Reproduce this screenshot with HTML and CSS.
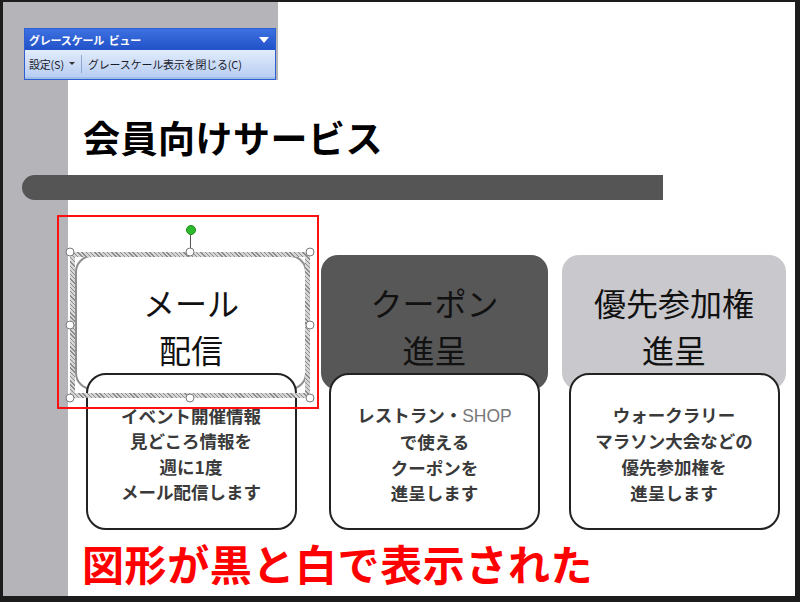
FILE: index.html
```html
<!DOCTYPE html>
<html lang="ja">
<head>
<meta charset="utf-8">
<title>グレースケール ビュー</title>
<link rel="stylesheet" href="styles.css">
</head>
<body>
<div class="screen">
  <div class="canvas">
    <div class="toolbar">
      <div class="tb-title"><span>グレースケール&nbsp;&nbsp;ビュー</span><span class="tb-arrow"></span></div>
      <div class="tb-row"><span>設定(S)</span><span class="tb-caret"></span><span class="tb-sep"></span><span>グレースケール表示を閉じる(C)</span></div>
    </div>
    <h1 class="title">会員向けサービス</h1>
    <div class="rule"></div>
    <div class="cards">
      <div class="card">
        <div class="head head-white"><span>メール</span><span>配信</span></div>
        <div class="body"><span>イベント開催情報</span><span>見どころ情報を</span><span>週に1度</span><span>メール配信します</span></div>
        <div class="selection">
          <div class="sel-ring"></div>
          <div class="rot-line"></div>
          <div class="rot-dot"></div>
          <div class="hd hd-tl"></div><div class="hd hd-tc"></div><div class="hd hd-tr"></div>
          <div class="hd hd-ml"></div><div class="hd hd-mr"></div>
          <div class="hd hd-bl"></div><div class="hd hd-bc"></div><div class="hd hd-br"></div>
        </div>
        <div class="red-box"></div>
      </div>
      <div class="card">
        <div class="head head-dark"><span>クーポン</span><span>進呈</span></div>
        <div class="body"><span>レストラン・<em class="latin">SHOP</em></span><span>で使える</span><span>クーポンを</span><span>進呈します</span></div>
      </div>
      <div class="card">
        <div class="head head-light"><span>優先参加権</span><span>進呈</span></div>
        <div class="body body-wide"><span>ウォークラリー</span><span>マラソン大会などの</span><span>優先参加権を</span><span>進呈します</span></div>
      </div>
    </div>
    <p class="caption">図形が黒と白で表示された</p>
  </div>
</div>
</body>
</html>
```

FILE: styles.css
```css
html, body {
  margin: 0;
  padding: 0;
  background: #1c1c1c;
}

.screen {
  width: 800px;
  height: 602px;
  box-sizing: border-box;
  padding: 2px 5px 6px 3px;
  background: #1c1c1c;
}

.canvas {
  position: relative;
  width: 792px;
  height: 594px;
  overflow: hidden;
  font-family: "Noto Sans CJK JP", "Noto Sans", sans-serif;
  background:
    linear-gradient(#b5b5b9, #b5b5b9) 0 0 / 65px 100% no-repeat,
    linear-gradient(#b5b5b9, #b5b5b9) 0 0 / 275px 78px no-repeat,
    #ffffff;
  display: flex;
  flex-direction: column;
}

/* floating toolbar */
.toolbar {
  position: absolute;
  left: 21px;
  top: 26px;
  width: 252px;
  height: 52px;
  box-sizing: border-box;
  border: 1px solid #2d5fd2;
  display: flex;
  flex-direction: column;
  z-index: 5;
}

.tb-title {
  height: 21px;
  flex: none;
  background: linear-gradient(#3d70e0, #2152c8);
  color: #ffffff;
  font-size: 11px;
  font-weight: 700;
  display: flex;
  align-items: center;
  justify-content: space-between;
  padding: 0 6px 0 4px;
  letter-spacing: -0.2px;
}

.tb-arrow {
  width: 0;
  height: 0;
  border-left: 5px solid transparent;
  border-right: 5px solid transparent;
  border-top: 6px solid #ffffff;
}

.tb-row {
  flex: 1;
  background: linear-gradient(#e2ecfb, #b8cef2);
  border-bottom: 2px solid #a3bde9;
  color: #1a1a2a;
  font-size: 11px;
  display: flex;
  align-items: center;
  padding: 0 4px;
  letter-spacing: -0.2px;
}

.tb-caret {
  width: 0;
  height: 0;
  margin-left: 5px;
  border-left: 3px solid transparent;
  border-right: 3px solid transparent;
  border-top: 3px solid #333;
}

.tb-sep {
  width: 1px;
  height: 18px;
  background: #8ea7d2;
  margin: 0 6px 0 6px;
}

/* slide */
.title {
  margin: 113px 0 0 80px;
  font-size: 37px;
  line-height: 44px;
  height: 44px;
  font-weight: 700;
  color: #000;
  letter-spacing: 0.5px;
}

.rule {
  margin: 16px 0 0 19px;
  width: 641px;
  height: 25px;
  background: #555555;
  border-radius: 13px 0 0 13px;
}

.cards {
  margin: 55px 0 0 72px;
  display: grid;
  grid-template-columns: 232px 227px 224px;
  column-gap: 14px;
}

.card {
  position: relative;
  display: flex;
  flex-direction: column;
  align-items: center;
}

.head {
  width: 100%;
  height: 135px;
  box-sizing: border-box;
  border-radius: 17px;
  display: flex;
  flex-direction: column;
  align-items: center;
  justify-content: center;
  padding-top: 7px;
  font-size: 32px;
  line-height: 47px;
  color: #111;
}

.head-white {
  background: #ffffff;
  border: 2px solid #8e8e8e;
}

.head-dark {
  background: #575757;
}

.head-light {
  background: #c9c9cd;
}

.body {
  position: relative;
  width: 211px;
  height: 157px;
  margin-top: -17px;
  box-sizing: border-box;
  background: #ffffff;
  border: 2px solid #222;
  border-radius: 20px;
  display: flex;
  flex-direction: column;
  align-items: center;
  justify-content: center;
  padding-top: 4px;
  font-size: 17.5px;
  line-height: 25.5px;
  font-weight: 700;
  color: #3a3a3a;
}

.body-wide {
  line-height: 26px;
}

.latin {
  font-style: normal;
  font-weight: 400;
  color: #777;
  font-family: "Liberation Sans", Arial, sans-serif;
}

/* selection overlay on first shape */
.selection {
  position: absolute;
  left: -5px;
  top: -3px;
  width: 240px;
  height: 146px;
  z-index: 3;
}

.sel-ring {
  position: absolute;
  inset: 0;
  border: 5px solid #c0c0c0;
  border-image: repeating-linear-gradient(45deg, #8c8c8c 0 1px, #d6d6d6 1px 3px) 5;
}

.rot-line {
  position: absolute;
  left: 120px;
  top: -19px;
  width: 1px;
  height: 19px;
  background: #555;
}

.rot-dot {
  position: absolute;
  left: 116px;
  top: -27px;
  width: 8px;
  height: 8px;
  border-radius: 50%;
  background: #2dbb2d;
  border: 1px solid #1c8a1c;
}

.hd {
  position: absolute;
  width: 7px;
  height: 7px;
  border-radius: 50%;
  background: #ffffff;
  border: 1px solid #7a7a7a;
  transform: translate(-50%, -50%);
}

.hd-tl { left: 0; top: 0; }
.hd-tc { left: 50%; top: 0; }
.hd-tr { left: 100%; top: 0; }
.hd-ml { left: 0; top: 50%; }
.hd-mr { left: 100%; top: 50%; }
.hd-bl { left: 0; top: 100%; }
.hd-bc { left: 50%; top: 100%; }
.hd-br { left: 100%; top: 100%; }

.red-box {
  position: absolute;
  left: -18px;
  top: -40px;
  width: 262px;
  height: 194px;
  box-sizing: border-box;
  border: 2px solid #ff1010;
  z-index: 4;
}

.caption {
  margin: 10px 0 0 79px;
  font-size: 42px;
  line-height: 46px;
  font-weight: 700;
  color: #ff0000;
  letter-spacing: 0.6px;
}
```
